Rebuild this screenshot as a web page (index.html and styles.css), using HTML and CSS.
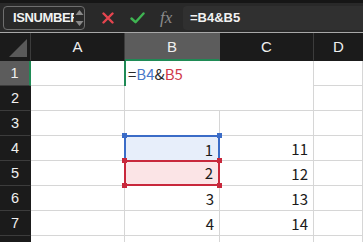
FILE: index.html
```html
<!DOCTYPE html>
<html lang="ja">
<head>
    <meta charset="UTF-8">
    <title>Sheet</title>
    <link rel="stylesheet" href="styles.css">
</head>
<body>
    <!-- Formula bar -->
    <div class="toolbar">
        <div class="name-box">
            <span class="name-text">ISNUMBER</span>
            <span class="spin">
                <svg width="9" height="18" viewBox="0 0 9 18">
                    <path d="M0.5 6 L4.5 1 L8.5 6 Z" fill="#8a8a8a"/>
                    <path d="M0.5 12 L4.5 17 L8.5 12 Z" fill="#8a8a8a"/>
                </svg>
            </span>
        </div>
        <div class="bar-icons">
            <svg class="icon-cancel" width="12" height="12" viewBox="0 0 12 12">
                <path d="M1.5 1.5 L10.5 10.5 M10.5 1.5 L1.5 10.5" stroke="#e5454f" stroke-width="2.4" stroke-linecap="round"/>
            </svg>
            <svg class="icon-enter" width="15" height="12" viewBox="0 0 15 12">
                <path d="M1.5 6.5 L5.5 10.2 L13.5 1.5" stroke="#3fb452" stroke-width="2.4" fill="none" stroke-linecap="round" stroke-linejoin="round"/>
            </svg>
            <span class="fx">fx</span>
        </div>
        <div class="formula-input">=B4&amp;B5</div>
    </div>

    <!-- Grid -->
    <div class="sheet">
        <div class="corner"><span class="corner-tri"></span></div>
        <div class="col-head">A</div>
        <div class="col-head active">B</div>
        <div class="col-head">C</div>
        <div class="col-head last">D</div>

        <div class="row-head active">1</div>
        <div class="cell"></div>
        <div class="editor">=<span class="ref-blue">B4</span>&amp;<span class="ref-red">B5</span></div>
        <div class="cell"></div>

        <div class="row-head">2</div>
        <div class="cell"></div>
        <div class="cell"></div>

        <div class="row-head">3</div>
        <div class="cell"></div>
        <div class="cell"></div>
        <div class="cell"></div>
        <div class="cell"></div>

        <div class="row-head">4</div>
        <div class="cell"></div>
        <div class="cell num range-blue">1
            <span class="handle blue tl"></span><span class="handle blue tr"></span>
        </div>
        <div class="cell num">11</div>
        <div class="cell"></div>

        <div class="row-head">5</div>
        <div class="cell"></div>
        <div class="cell num range-red">2
            <span class="handle red tl"></span><span class="handle red tr"></span>
            <span class="handle red bl"></span><span class="handle red br"></span>
        </div>
        <div class="cell num">12</div>
        <div class="cell"></div>

        <div class="row-head">6</div>
        <div class="cell"></div>
        <div class="cell num">3</div>
        <div class="cell num">13</div>
        <div class="cell"></div>

        <div class="row-head">7</div>
        <div class="cell"></div>
        <div class="cell num">4</div>
        <div class="cell num">14</div>
        <div class="cell"></div>

        <div class="row-head"></div>
        <div class="cell"></div>
        <div class="cell"></div>
        <div class="cell"></div>
        <div class="cell"></div>
    </div>
</body>
</html>
```

FILE: styles.css
```css
body {
    margin: 0;
    width: 363px;
    height: 242px;
    overflow: hidden;
    background: #ffffff;
    font-family: 'Liberation Sans', 'Noto Sans CJK JP', sans-serif;
}

/* Formula bar */
.toolbar {
    height: 29px;
    border-top: 3px solid #161616;
    border-bottom: 1px solid #a8a8a8;
    background-color: #292929;
    display: flex;
    align-items: center;
    padding-left: 3px;
}

.name-box {
    width: 80px;
    height: 22px;
    border: 1px solid #6e6e6e;
    border-radius: 4px;
    display: flex;
    align-items: center;
    flex-shrink: 0;
}

.name-text {
    width: 61px;
    padding-left: 9px;
    overflow: hidden;
    white-space: nowrap;
    color: #f2f2f2;
    font-size: 13px;
    font-weight: bold;
    letter-spacing: -0.4px;
    flex-shrink: 0;
}

.spin {
    display: flex;
    align-items: center;
    margin-left: 1px;
}

.bar-icons {
    display: flex;
    align-items: center;
    width: 81px;
    padding-left: 17px;
    flex-shrink: 0;
}

.icon-cancel {
    margin-right: 16px;
}

.icon-enter {
    margin-right: 15px;
}

.fx {
    color: #8c8c8c;
    font-family: 'Liberation Serif', serif;
    font-style: italic;
    font-size: 17px;
}

.formula-input {
    flex: 1;
    height: 24px;
    line-height: 24px;
    background-color: #303030;
    border-radius: 4px 0 0 4px;
    padding-left: 7px;
    color: #f2f2f2;
    font-size: 13px;
    font-weight: bold;
}

/* Sheet */
.sheet {
    display: grid;
    grid-template-columns: 31px 94px 95px 94px 1fr;
    grid-template-rows: 28px repeat(8, 25px);
}

.corner {
    background-color: #1b1b1b;
    border-right: 1px solid #3c3c3c;
    border-bottom: 1px solid #1b1b1b;
    position: relative;
}

.corner-tri {
    position: absolute;
    right: 3px;
    bottom: 3px;
    width: 0;
    height: 0;
    border-left: 18px solid transparent;
    border-bottom: 18px solid #5a5a5a;
}

.col-head {
    background-color: #1b1b1b;
    border-right: 1px solid #3c3c3c;
    border-bottom: 1px solid #1b1b1b;
    color: #f0f0f0;
    font-size: 15px;
    display: flex;
    align-items: center;
    justify-content: center;
}

.col-head.active {
    background-color: #5c5c5c;
    border-right-color: #5c5c5c;
    border-bottom: 2px solid #1f8a55;
}

.col-head.last {
    border-right: none;
}

.row-head {
    background-color: #1b1b1b;
    border-right: 1px solid #1b1b1b;
    border-bottom: 1px solid #3c3c3c;
    color: #f0f0f0;
    font-size: 14.5px;
    display: flex;
    align-items: center;
    justify-content: center;
}

.row-head.active {
    background-color: #5c5c5c;
    border-right: 2px solid #1f8a55;
}

.cell {
    border-right: 1px solid #d6d6d6;
    border-bottom: 1px solid #d6d6d6;
    position: relative;
}

.num {
    font-family: 'Noto Sans CJK JP', sans-serif;
    font-size: 15px;
    color: #1a1a1a;
    text-align: right;
    padding-right: 5px;
    line-height: 25px;
}

/* Cell being edited, spills over B1:C2 */
.editor {
    grid-column: 3 / 5;
    grid-row: 2 / 4;
    background-color: #ffffff;
    border-bottom: 1px solid #d6d6d6;
    border-right: 1px solid #d6d6d6;
    padding-left: 3px;
    padding-top: 1px;
    font-family: 'Noto Sans CJK JP', sans-serif;
    font-size: 15px;
    line-height: 24px;
    color: #2a2a2a;
    position: relative;
}

.editor::before {
    content: "";
    position: absolute;
    left: -1px;
    top: 0;
    width: 2px;
    height: 25px;
    background-color: #1f8a55;
}

.ref-blue {
    color: #4a78c9;
}

.ref-red {
    color: #d0394a;
}

/* Reference ranges */
.range-blue {
    background-color: #e7eefa;
    border: 2px solid #3b6cc7;
    border-bottom: none;
    margin-left: -1px;
    margin-top: -1px;
}

.range-red {
    background-color: #fbe4e6;
    border: 2px solid #c8283c;
    margin-left: -1px;
    margin-top: -1px;
    line-height: 22px;
}

.handle {
    position: absolute;
    width: 5px;
    height: 5px;
    z-index: 2;
}

.handle.blue { background-color: #3b6cc7; }
.handle.red { background-color: #c8283c; }

.handle.tl { left: -4px; top: -4px; }
.handle.tr { right: -4px; top: -4px; }
.handle.bl { left: -4px; bottom: -4px; }
.handle.br { right: -4px; bottom: -4px; }
```
